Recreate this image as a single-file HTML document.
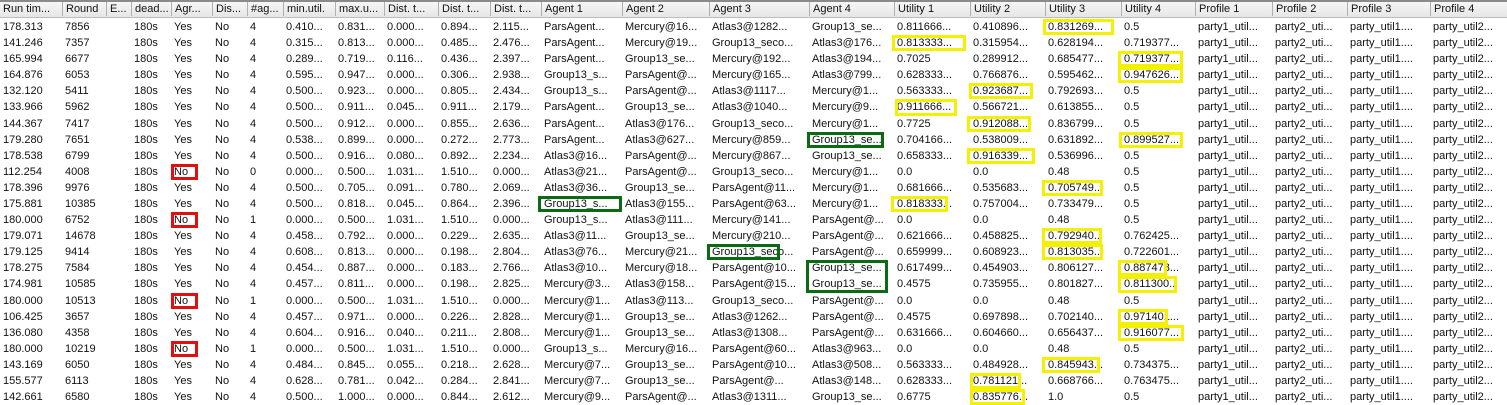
<!DOCTYPE html>
<html><head><meta charset="utf-8"><style>
body{margin:0;width:1507px;height:405px;overflow:hidden;background:#fff;font-family:"Liberation Sans",sans-serif;font-size:11px;color:#111;position:relative}
.hd{position:absolute;left:0;top:0;width:1507px;height:18px;background:linear-gradient(#f6f6f6,#e6e6e6);border-top:2px solid #8a8a8a;border-bottom:1px solid #bdbdbd;box-sizing:border-box}
.h{position:absolute;top:2px;height:14px;line-height:14px;border-left:1px solid #b0b0b0;padding-left:3px;white-space:nowrap;overflow:hidden}
.c{position:absolute;height:16px;line-height:16px;white-space:nowrap;overflow:hidden}
.b{position:absolute;box-sizing:border-box;border:3px solid #f5f000}
.g{border-color:#0a6b12}.r{border-color:#e01010}
</style></head><body>
<div class="hd"></div>
<div id="t"></div>
<script>
var X=[0,62,106,131,171,212,247,283,335,384,438,490,541,622,709,809,894,970,1045,1121,1195,1272,1347,1430,1507];
var H=["Run tim...","Round","E...","dead...","Agr...","Dis...","#ag...","min.util.","max.u...","Dist. t...","Dist. t...","Dist. t...","Agent 1","Agent 2","Agent 3","Agent 4","Utility 1","Utility 2","Utility 3","Utility 4","Profile 1","Profile 2","Profile 3","Profile 4"];
var R=[
"178.313|7856|0.410|0.831|0.000|0.894|2.115|ParsAgent...|Mercury@16...|Atlas3@1282...|Group13_se...|0.811666...|0.410896...|0.831269...|0.5",
"141.246|7357|0.315|0.813|0.000|0.485|2.476|ParsAgent...|Mercury@19...|Group13_seco...|Atlas3@176...|0.813333...|0.315954...|0.628194...|0.719377...",
"165.994|6677|0.289|0.719|0.116|0.436|2.397|ParsAgent...|Group13_se...|Mercury@192...|Atlas3@194...|0.7025|0.289912...|0.685477...|0.719377...",
"164.876|6053|0.595|0.947|0.000|0.306|2.938|Group13_s...|ParsAgent@...|Mercury@165...|Atlas3@799...|0.628333...|0.766876...|0.595462...|0.947626...",
"132.120|5411|0.500|0.923|0.000|0.805|2.434|Group13_s...|ParsAgent@...|Atlas3@1117...|Mercury@1...|0.563333...|0.923687...|0.792693...|0.5",
"133.966|5962|0.500|0.911|0.045|0.911|2.179|ParsAgent...|Group13_se...|Atlas3@1040...|Mercury@9...|0.911666...|0.566721...|0.613855...|0.5",
"144.367|7417|0.500|0.912|0.000|0.855|2.636|ParsAgent...|Atlas3@176...|Group13_seco...|Mercury@1...|0.7725|0.912088...|0.836799...|0.5",
"179.280|7651|0.538|0.899|0.000|0.272|2.773|ParsAgent...|Atlas3@627...|Mercury@859...|Group13_se...|0.704166...|0.538009...|0.631892...|0.899527...",
"178.538|6799|0.500|0.916|0.080|0.892|2.234|Atlas3@16...|ParsAgent@...|Mercury@867...|Group13_se...|0.658333...|0.916339...|0.536996...|0.5",
"112.254|4008|0.000|0.500|1.031|1.510|0.000|Atlas3@21...|ParsAgent@...|Group13_seco...|Mercury@1...|0.0|0.0|0.48|0.5",
"178.396|9976|0.500|0.705|0.091|0.780|2.069|Atlas3@36...|Group13_se...|ParsAgent@11...|Mercury@1...|0.681666...|0.535683...|0.705749...|0.5",
"175.881|10385|0.500|0.818|0.045|0.864|2.396|Group13_s...|Atlas3@155...|ParsAgent@63...|Mercury@1...|0.818333...|0.757004...|0.733479...|0.5",
"180.000|6752|0.000|0.500|1.031|1.510|0.000|Group13_s...|Atlas3@111...|Mercury@141...|ParsAgent@...|0.0|0.0|0.48|0.5",
"179.071|14678|0.458|0.792|0.000|0.229|2.635|Atlas3@11...|Group13_se...|Mercury@210...|ParsAgent@...|0.621666...|0.458825...|0.792940...|0.762425...",
"179.125|9414|0.608|0.813|0.000|0.198|2.804|Atlas3@76...|Mercury@21...|Group13_seco...|ParsAgent@...|0.659999...|0.608923...|0.813035...|0.722601...",
"178.275|7584|0.454|0.887|0.000|0.183|2.766|Atlas3@10...|Mercury@18...|ParsAgent@10...|Group13_se...|0.617499...|0.454903...|0.806127...|0.887478...",
"174.981|10585|0.457|0.811|0.000|0.198|2.825|Mercury@3...|Atlas3@158...|ParsAgent@15...|Group13_se...|0.4575|0.735955...|0.801827...|0.811300...",
"180.000|10513|0.000|0.500|1.031|1.510|0.000|Mercury@1...|Atlas3@113...|Group13_seco...|ParsAgent@...|0.0|0.0|0.48|0.5",
"106.425|3657|0.457|0.971|0.000|0.226|2.828|Mercury@1...|Group13_se...|Atlas3@1262...|ParsAgent@...|0.4575|0.697898...|0.702140...|0.971401...",
"136.080|4358|0.604|0.916|0.040|0.211|2.808|Mercury@1...|Group13_se...|Atlas3@1308...|ParsAgent@...|0.631666...|0.604660...|0.656437...|0.916077...",
"180.000|10219|0.000|0.500|1.031|1.510|0.000|Group13_s...|Mercury@16...|ParsAgent@60...|Atlas3@963...|0.0|0.0|0.48|0.5",
"143.169|6050|0.484|0.845|0.055|0.218|2.628|Mercury@7...|Group13_se...|ParsAgent@10...|Atlas3@508...|0.563333...|0.484928...|0.845943...|0.734375...",
"155.577|6113|0.628|0.781|0.042|0.284|2.841|Mercury@7...|Group13_se...|ParsAgent@...|Atlas3@148...|0.628333...|0.781121...|0.668766...|0.763475...",
"142.661|6580|0.500|1.000|0.000|0.844|2.612|Mercury@9...|ParsAgent@...|Atlas3@1311...|Group13_se...|0.6775|0.835776...|1.0|0.5"];
var o="";
for(var i=0;i<H.length;i++)o+='<div class="h" style="left:'+(X[i]+(i?0:-1))+'px;width:'+(X[i+1]-X[i]-4)+'px">'+H[i]+'</div>';
for(var r=0;r<R.length;r++){var p=R[r].split("|");var no=(p[2]=="0.000");
var v=[p[0],p[1],"","180s",no?"No":"Yes","No",no?(r==9?"0":"1"):"4",p[2]+"...",p[3]+"...",p[4]+"...",p[5]+"...",p[6]+"...",p[7],p[8],p[9],p[10],p[11],p[12],p[13],p[14],"party1_util...","party2_uti...","party_util1....","party_util2..."];
var y=19+r*16.09;
for(var i=0;i<v.length;i++)o+='<div class="c" style="top:'+y+'px;left:'+(X[i]+3)+'px;width:'+(X[i+1]-X[i]-3)+'px">'+v[i]+'</div>';}
function bx(x1,x2,r1,r2,c){var y1=19+r1*16.09,y2=19+(r2+1)*16.09;o+='<div class="b '+(c||"")+'" style="left:'+x1+'px;top:'+y1+'px;width:'+(x2-x1)+'px;height:'+(y2-y1)+'px"></div>';}
bx(1043,1114,0,0);bx(892,966,1,1);bx(1118,1183,2,2);bx(1118,1183,3,3);bx(969,1033,4,4);bx(895,957,5,5);bx(967,1031,6,6);bx(1119,1183,7,7);bx(967,1035,8,8);bx(1042,1103,10,10);bx(891,948,11,11);bx(1042,1102,13,13);bx(1042,1103,14,14);bx(1118,1167,15,15);bx(1118,1177,16,16);bx(1118,1168,18,18);bx(1118,1184,19,19);bx(1042,1100,21,21);bx(970,1021,22,22);bx(970,1025,23,23);
bx(807,884,7,7,"g");bx(806,888,15,16,"g");bx(538,622,11,11,"g");bx(707,780,14,14,"g");
bx(171,198,9,9,"r");bx(171,198,12,12,"r");bx(171,198,17,17,"r");bx(171,198,20,20,"r");
document.getElementById("t").innerHTML=o;
</script>
</body></html>
